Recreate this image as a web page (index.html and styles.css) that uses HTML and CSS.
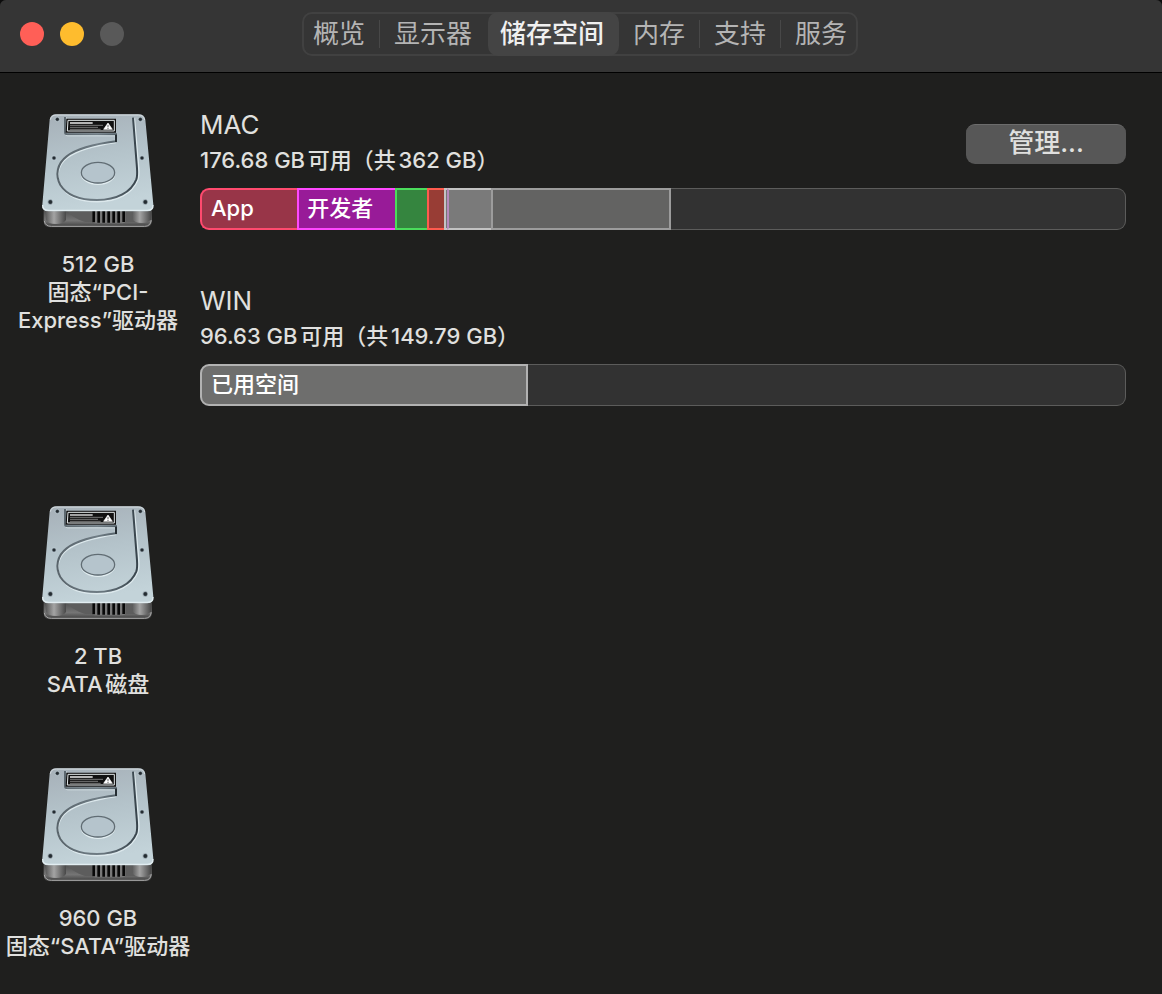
FILE: index.html
```html
<!DOCTYPE html>
<html lang="zh-CN">
<head>
<meta charset="utf-8">
<title>储存空间</title>
<link rel="stylesheet" href="styles.css">
</head>
<body>
<svg class="defs" aria-hidden="true">
  <defs>
    <linearGradient id="plate" x1="0" y1="0" x2="0.2" y2="1">
      <stop offset="0" stop-color="#a6b0b8"/><stop offset="0.5" stop-color="#b4c3ca"/><stop offset="1" stop-color="#c3d3d9"/>
    </linearGradient>
    <linearGradient id="base" x1="0" y1="0" x2="0" y2="1">
      <stop offset="0" stop-color="#3c3c3c"/><stop offset="0.7" stop-color="#757575"/><stop offset="1" stop-color="#3a3a3a"/>
    </linearGradient>
    <linearGradient id="post" x1="0" y1="0" x2="1" y2="0">
      <stop offset="0" stop-color="#5c5c5c"/><stop offset="0.4" stop-color="#a4a4a4"/><stop offset="1" stop-color="#484848"/>
    </linearGradient>
    <linearGradient id="edge" x1="0" y1="0" x2="1" y2="0">
      <stop offset="0" stop-color="#59646b"/><stop offset="0.5" stop-color="#6f7c84"/><stop offset="1" stop-color="#38444c"/>
    </linearGradient>
    <symbol id="drive" viewBox="30 39 348 348">
      <path d="M41 315H365V362Q365 382 346 382H62Q41 382 41 362Z" fill="url(#base)"/>
      <path d="M43 363Q46 379 64 379H344Q361 379 364 361" fill="none" stroke="#aaa" stroke-width="3"/>
      <path d="M110 332H320V366H165Q128 354 110 332Z" fill="#5d5d5d"/>
      <path d="M48 328H108V360Q100 372 78 372Q54 372 48 360Z" fill="url(#post)"/>
      <path d="M307 330H363V358Q356 369 336 369Q313 369 307 358Z" fill="url(#post)"/>
      <path d="M186 332H286V364Q286 370 278 370H194Q186 370 186 364Z" fill="#777"/>
      <path d="M191 333V367M206 333V368M221 333V368M236 333V368M251 333V368M266 333V368M281 333V366" stroke="#080808" stroke-width="8"/>
      <path d="M78 43H326Q343 43 346 59L370 314Q371 333 352 334H56Q35 333 37 314L59 59Q62 43 78 43Z" fill="url(#plate)"/>
      <path d="M61 59Q64 45 79 45H325Q341 45 344 60" fill="none" stroke="#d6dde1" stroke-width="3"/>
      <path d="M38 315Q37 331 56 331H352Q370 331 369 315" fill="none" stroke="#e2edf1" stroke-width="4"/>
      <path d="M107 52V99Q107 106 114 106H257V127C210 134 148 146 112 173C84 194 75 229 93 259C112 289 151 305 202 305C263 305 307 280 323 240C327 231 327 220 326 206L313 55" fill="none" stroke="#dce8ec" stroke-width="5"/>
      <path d="M105 51V97Q105 103 112 103H258V124C211 130 147 141 110 169C81 191 75 226 91 255C110 285 151 300 201 300C261 300 304 276 319 238C322 229 322 220 321 205L309 53" fill="none" stroke="url(#edge)" stroke-width="6"/>
      <path d="M258 104V126" stroke="#252d32" stroke-width="6"/>
      <ellipse cx="204" cy="221" rx="50" ry="32" fill="#b8c8d0" stroke="#e2edf0" stroke-width="4"/>
      <ellipse cx="204" cy="218" rx="50" ry="31" fill="#b5c4cc" stroke="#616d74" stroke-width="4"/>
      <path d="M109 56H258V98H107Z" fill="#111"/>
      <path d="M114 61H253V93H112Z" fill="#111" stroke="#e3e8e9" stroke-width="3"/>
      <path d="M120 69H188" stroke="#eee" stroke-width="4"/>
      <path d="M120 76H219M120 82H204M120 88H212" stroke="#aaa" stroke-width="2"/>
      <path d="M234 69L247 88H221Z" fill="#fff" stroke="#fff" stroke-width="2"/>
      <path d="M234 75V82M234 84V87" stroke="#111" stroke-width="2"/>
      <g fill="#55616a" stroke="#c6d3d9" stroke-width="2">
        <circle cx="82" cy="58" r="7"/><circle cx="331" cy="58" r="7"/><circle cx="72" cy="174" r="7"/><circle cx="336" cy="174" r="7"/><circle cx="61" cy="306" r="8"/><circle cx="346" cy="306" r="8"/>
      </g>
      <g fill="#242b30">
        <circle cx="82" cy="58" r="4"/><circle cx="331" cy="58" r="4"/><circle cx="72" cy="174" r="4"/><circle cx="336" cy="174" r="4"/><circle cx="61" cy="306" r="5"/><circle cx="346" cy="306" r="5"/>
      </g>
    </symbol>
  </defs>
</svg>
<div class="window">
  <header class="titlebar">
    <div class="lights">
      <button class="light close" aria-label="关闭"></button>
      <button class="light minimize" aria-label="最小化"></button>
      <button class="light" aria-label="缩放" disabled></button>
    </div>
    <nav class="tabs">
      <button class="tab">概览</button>
      <span class="divider"></span>
      <button class="tab">显示器</button>
      <button class="tab selected" aria-current="page">储存空间</button>
      <button class="tab">内存</button>
      <span class="divider"></span>
      <button class="tab">支持</button>
      <span class="divider"></span>
      <button class="tab">服务</button>
    </nav>
    <div></div>
  </header>
  <main class="disks">
    <section class="disk">
      <div class="device">
        <svg class="drive-icon" aria-hidden="true"><use href="#drive"/></svg>
        <p class="device-name">512 GB<br>固态“PCI-<br>Express”驱动器</p>
      </div>
      <div class="volumes">
        <article class="volume">
          <div class="volume-head">
            <div>
              <h2 class="volume-name">MAC</h2>
              <p class="volume-info">176.68 GB可用（共362 GB）</p>
            </div>
            <button class="manage">管理...</button>
          </div>
          <div class="bar">
            <span class="segment apps" style="width:10.5%">App</span>
            <span class="segment developer" style="width:10.6%">开发者</span>
            <span class="segment green" style="width:3.4%"></span>
            <span class="segment red" style="width:1.9%"></span>
            <span class="segment light-gray" style="width:.3%"></span>
            <span class="segment mail" style="width:4.7%"></span>
            <span class="segment system" style="width:19.5%"></span>
            <span class="free"></span>
          </div>
        </article>
        <article class="volume">
          <div class="volume-head">
            <div>
              <h2 class="volume-name">WIN</h2>
              <p class="volume-info">96.63 GB可用（共149.79 GB）</p>
            </div>
          </div>
          <div class="bar">
            <span class="segment used" style="width:35.4%">已用空间</span>
            <span class="free"></span>
          </div>
        </article>
      </div>
    </section>
    <section class="disk">
      <div class="device">
        <svg class="drive-icon" aria-hidden="true"><use href="#drive"/></svg>
        <p class="device-name">2 TB<br>SATA磁盘</p>
      </div>
    </section>
    <section class="disk">
      <div class="device">
        <svg class="drive-icon" aria-hidden="true"><use href="#drive"/></svg>
        <p class="device-name">960 GB<br>固态“SATA”驱动器</p>
      </div>
    </section>
  </main>
</div>
</body>
</html>
```
FILE: styles.css
```css
* { box-sizing: border-box; }
body {
  margin: 0;
  background: #0c0c0c;
  color: #e0e0df;
  font: 22px/28px Inter, "Noto Sans CJK SC", sans-serif;
  text-autospace: normal;
}
h2, p { margin: 0; font-weight: 400; }
button { border: 0; padding: 0; font: inherit; color: inherit; }
.defs { position: absolute; width: 0; height: 0; }
.window {
  min-height: 100vh;
  background: #1f1f1e;
  border-radius: 6px;
  overflow: hidden;
}
.titlebar {
  display: grid;
  grid-template-columns: 1fr auto 1fr;
  align-items: start;
  height: 73px;
  padding: 12px 22px 0 20px;
  background: #353535;
  border-bottom: 1px solid #000;
}
.lights { display: flex; gap: 16px; padding-top: 10px; }
.light { width: 24px; height: 24px; border-radius: 50%; background: #595959; }
.close { background: #ff5f57; }
.minimize { background: #febc2e; }
.tabs {
  display: flex;
  align-items: center;
  height: 44px;
  border: 2px solid #414141;
  border-radius: 10px;
}
.tab {
  height: 44px;
  padding: 0 14px;
  background: none;
  color: #b4b4b4;
  font-size: 26px;
  line-height: 44px;
}
.tab:first-child { padding-left: 9px; }
.tab:last-child { padding-right: 9px; }
.tab:has(+ .selected) { padding-right: 16px; }
.tab.selected {
  padding: 0 15px 0 12px;
  border-radius: 10px;
  background: #444;
  color: #f0f0f0;
  font-weight: 500;
}
.divider { width: 1px; height: 28px; background: #484848; }
.disks { padding-top: 24px; }
.disk { display: grid; grid-template-columns: 196px 1fr; }
.device {
  display: flex;
  flex-direction: column;
  align-items: center;
  gap: 21px;
  padding: 16px 0 53px;
}
.drive-icon { width: 116px; height: 116px; }
.device-name { text-align: center; white-space: nowrap; font-weight: 500; }
.volumes {
  display: flex;
  flex-direction: column;
  gap: 53px;
  padding: 10px 36px 83px 4px;
}
.volume-head { display: flex; justify-content: space-between; }
.volume-name { font-size: 26px; line-height: 36px; }
.volume-info { line-height: 34px; font-weight: 500; }
.manage {
  width: 160px;
  height: 40px;
  margin-top: 17px;
  padding-bottom: 4px;
  border-top: 1px solid #6c6c6c;
  border-radius: 9px;
  background: #575757;
  font-size: 26px;
  font-weight: 500;
  line-height: 34px;
  text-autospace: no-autospace;
}
.bar {
  display: flex;
  height: 42px;
  margin-top: 11px;
  border-radius: 9px;
  color: #fff;
  font-weight: 500;
}
.segment {
  border: 2px solid;
  border-right-width: 0;
  line-height: 36px;
  white-space: nowrap;
}
.segment:first-child { border-radius: 9px 0 0 9px; padding-left: 9px; }
.apps { border-color: #ff4a6e; background: #983548; }
.developer { padding-left: 8px; border-color: #ff48ff; background: #981b98; }
.green { border-color: #4bdc5c; background: #35853f; }
.red { border-color: #ff5b4e; background: #983d35; }
.light-gray { border-color: #c4c4c4; background: #777; }
.mail { border-color: #c2c2c2; border-left-color: #b78abd; background: #7a7a7a; }
.system { border-color: #9c9c9c; border-right-width: 2px; background: #636362; }
.used { border-color: #b2b2b2; border-right-width: 2px; background: #6e6e6d; }
.free {
  flex: 1;
  border: 1px solid #5c5c5b;
  border-left: 0;
  border-radius: 0 9px 9px 0;
  background: #323232;
}
```
